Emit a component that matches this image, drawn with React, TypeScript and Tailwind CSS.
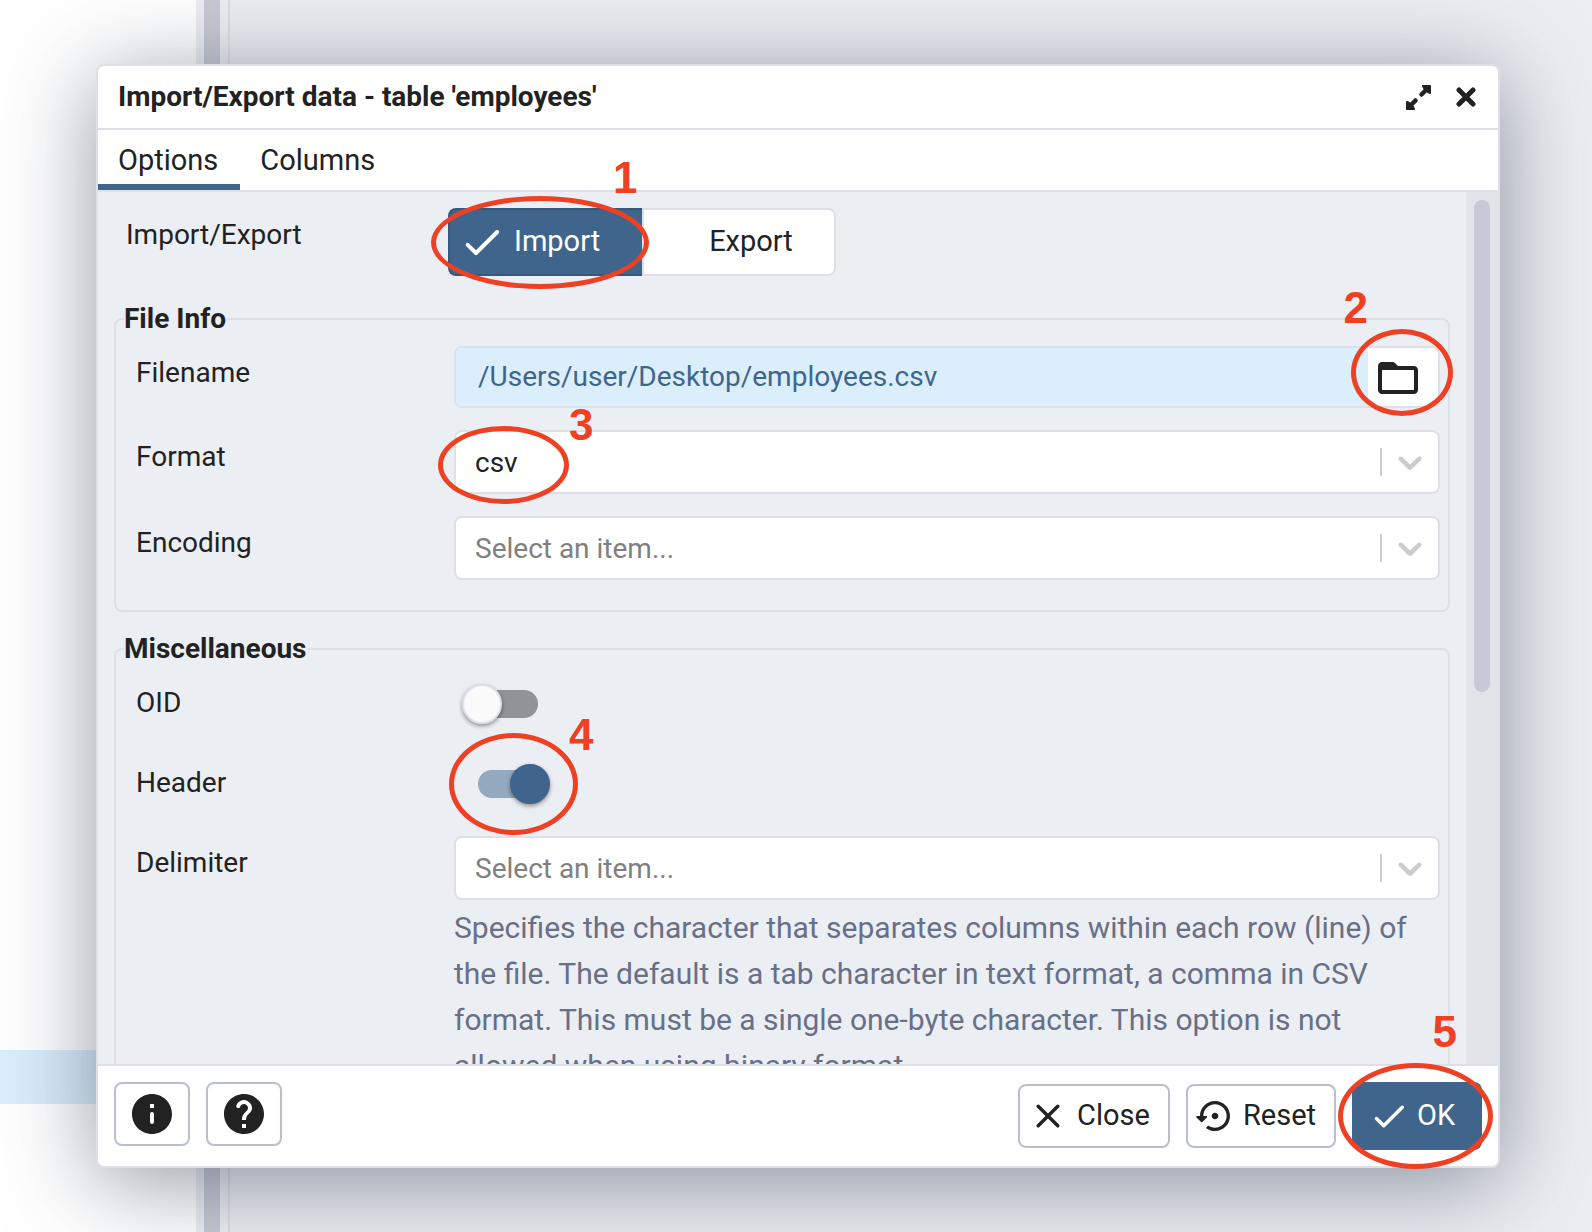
import React from "react";

const icons = {
  check:
    "M9 16.17L5.53 12.7c-.39-.39-1.02-.39-1.41 0-.39.39-.39 1.02 0 1.41l4.18 4.18c.39.39 1.02.39 1.41 0L20.29 7.71c.39-.39.39-1.02 0-1.41-.39-.39-1.02-.39-1.41 0L9 16.17z",
  close:
    "M18.3 5.71c-.39-.39-1.02-.39-1.41 0L12 10.59 7.11 5.7c-.39-.39-1.02-.39-1.41 0-.39.39-.39 1.02 0 1.41L10.59 12 5.7 16.89c-.39.39-.39 1.02 0 1.41.39.39 1.02.39 1.41 0L12 13.41l4.89 4.89c.39.39 1.02.39 1.41 0 .39-.39.39-1.02 0-1.41L13.41 12l4.89-4.89c.38-.38.38-1.02 0-1.4z",
  reset:
    "M14 12c0-1.1-.9-2-2-2s-2 .9-2 2 .9 2 2 2 2-.9 2-2zm-2-9c-4.97 0-9 4.03-9 9H1.21c-.45 0-.67.54-.35.85l2.79 2.79c.2.2.51.2.71 0l2.79-2.79c.3-.31.08-.85-.36-.85H5c0-3.87 3.13-7 7-7s7 3.13 7 7-3.13 7-7 7c-1.51 0-2.91-.49-4.06-1.3l-1.42 1.44C8.04 20.3 9.94 21 12 21c4.97 0 9-4.03 9-9s-4.03-9-9-9z",
  folder:
    "M20 6h-8l-1.41-1.41C10.21 4.21 9.7 4 9.17 4H4c-1.1 0-1.99.9-1.99 2L2 18c0 1.1.9 2 2 2h16c1.1 0 2-.9 2-2V8c0-1.1-.9-2-2-2zm-.500 12h-15c-.28 0-.5-.22-.5-.5v-9c0-.28.22-.5.5-.5h15c.28 0 .5.22.5.5v9c0 .28-.22.5-.5.5z",
  info: "M12 2C6.48 2 2 6.48 2 12s4.48 10 10 10 10-4.48 10-10S17.52 2 12 2zm0 15c-.55 0-1-.45-1-1v-4c0-.55.45-1 1-1s1 .45 1 1v4c0 .55-.45 1-1 1zm1-8h-2V7h2v2z",
  help: "M12 2C6.48 2 2 6.48 2 12s4.48 10 10 10 10-4.48 10-10S17.52 2 12 2zm1 17h-2v-2h2v2zm2.07-7.75l-.9.92c-.5.51-.86.97-1.04 1.69-.08.32-.13.68-.13 1.14h-2v-.5c0-.46.08-.9.22-1.31.2-.58.53-1.1.95-1.52l1.24-1.26c.46-.44.68-1.1.55-1.8-.13-.72-.69-1.33-1.39-1.53-1.11-.31-2.14.32-2.47 1.27-.12.37-.43.65-.82.65h-.3C8.4 9 8 8.44 8.16 7.88c.43-1.47 1.68-2.59 3.23-2.83 1.52-.24 2.97.55 3.87 1.8 1.18 1.63.83 3.38-.19 4.4z",
};

function Icon({ name, className }: { name: keyof typeof icons; className: string }) {
  return (
    <svg viewBox="0 0 24 24" fill="currentColor" className={className} aria-hidden="true">
      <path d={icons[name]} />
    </svg>
  );
}

function Row({
  label,
  htmlFor,
  children,
}: {
  label: string;
  htmlFor: string;
  children: React.ReactNode;
}) {
  return (
    <div className="flex items-start">
      <label htmlFor={htmlFor} className="w-[318px] shrink-0 pt-[7px] leading-10">
        {label}
      </label>
      <div className="min-w-0 flex-1">{children}</div>
    </div>
  );
}

function SelectField({ id, value, options }: { id: string; value: string; options: string[] }) {
  return (
    <div className="relative flex h-16 items-center rounded-lg border-2 border-[#dde0e6] bg-white">
      <select
        id={id}
        defaultValue={value}
        className={`h-full w-full appearance-none rounded-lg bg-transparent pl-[19px] pr-20 pt-0.5 outline-none ${
          value ? "text-[#222222]" : "text-[#808080]"
        }`}
      >
        <option value="">Select an item...</option>
        {options.map((option) => (
          <option key={option} value={option}>
            {option}
          </option>
        ))}
      </select>
      <div className="pointer-events-none absolute right-2 flex items-center gap-2">
        <div className="h-7 w-0.5 bg-[#cccccc]" />
        <svg viewBox="0 0 20 20" fill="#cccccc" className="h-10 w-10" aria-hidden="true">
          <path d="M4.516 7.548c0.436-0.446 1.043-0.481 1.576 0l3.908 3.747 3.908-3.747c0.533-0.481 1.141-0.446 1.574 0 0.436 0.445 0.408 1.197 0 1.615-0.406 0.418-4.695 4.502-4.695 4.502-0.217 0.223-0.502 0.335-0.787 0.335s-0.57-0.112-0.789-0.335c0 0-4.287-4.084-4.695-4.502s-0.436-1.17 0-1.615z" />
        </svg>
      </div>
    </div>
  );
}

function Switch({ id, defaultChecked = false }: { id: string; defaultChecked?: boolean }) {
  return (
    <div className="flex h-[58px] items-center pb-0.5">
      <div className="relative flex h-10 w-[84px] items-center px-2">
        <input
          id={id}
          type="checkbox"
          role="switch"
          defaultChecked={defaultChecked}
          className="peer h-7 w-full appearance-none rounded-full bg-[#929397] checked:bg-[#94a8c0]"
        />
        <span className="pointer-events-none absolute left-0 h-10 w-10 rounded-full border-2 border-[#dde0e6] bg-[#fafafa] shadow-[0_2px_4px_rgba(0,0,0,0.4)] peer-checked:left-10 peer-checked:border-[#40658c] peer-checked:bg-[#40658c]" />
      </div>
    </div>
  );
}

function App() {
  // Walkthrough steps drawn over the dialog
  const steps = [
    { id: 1, ring: "left-[333px] top-[130px] h-[93px] w-[218px]", digit: "left-[515px] top-[88px]" },
    { id: 2, ring: "right-[45px] top-[263px] h-[87px] w-[102px]", digit: "right-[130px] top-[218px]" },
    { id: 3, ring: "left-[340px] top-[360px] h-[78px] w-[131px]", digit: "left-[471px] top-[335px]" },
    { id: 4, ring: "left-[351px] top-[667px] h-[102px] w-[129px]", digit: "left-[471px] top-[645px]" },
    { id: 5, ring: "bottom-[-3px] right-[5px] h-[106px] w-[155px]", digit: "bottom-[110px] right-[41px]" },
  ];

  return (
    <div className="relative flex h-screen min-h-[600px] overflow-hidden bg-[#ebeef3] font-[Roboto,sans-serif] text-[28px] text-[#222222]">
      {/* Page behind the dialog */}
      <div className="flex w-[230px] shrink-0">
        <div className="flex flex-1 flex-col justify-end bg-white pb-32">
          <div className="h-[54px] bg-[#dbeefc]" />
        </div>
        <div className="w-[34px] border-r-2 border-[#dde0e6] bg-[#ebeef3]">
          <div className="flex h-full w-8 justify-center bg-[#eceef2]">
            <div className="w-4 bg-[#c7cad6]" />
          </div>
        </div>
      </div>

      {/* Dialog */}
      <div className="absolute inset-0 flex pb-16 pl-24 pr-[92px] pt-16">
        <div
          role="dialog"
          aria-labelledby="dialog-title"
          className="relative flex min-w-0 flex-1 flex-col rounded-lg border-2 border-[#dde0e6] bg-white shadow-[0_14px_92px_rgba(55,66,84,0.55)]"
        >
          <header className="flex h-16 shrink-0 items-center border-b-2 border-[#dde0e6] px-5">
            <h1 id="dialog-title" className="flex-1 font-bold">
              Import/Export data - table 'employees'
            </h1>
            <div className="flex items-center gap-6">
              <button aria-label="Maximize" className="flex h-6 w-6 items-center justify-center">
                <svg
                  viewBox="0 0 25 25"
                  className="h-[25px] w-[25px] shrink-0"
                  fill="currentColor"
                  stroke="currentColor"
                  strokeLinecap="round"
                  strokeLinejoin="round"
                  aria-hidden="true"
                >
                  <path d="M17 1h7v7l-2-1-4-4zM8 24H1v-7l2 1 4 4z" strokeWidth="2" />
                  <path d="M15.500 9.500l5-5M9.500 15.500l-5 5" strokeWidth="4.500" />
                </svg>
              </button>
              <button aria-label="Close dialog" className="flex h-6 w-6 items-center justify-center">
                <svg
                  viewBox="0 0 20 20"
                  className="h-5 w-5"
                  stroke="currentColor"
                  strokeWidth="5"
                  strokeLinecap="round"
                  aria-hidden="true"
                >
                  <path d="M3 3l14 14M17 3L3 17" />
                </svg>
              </button>
            </div>
          </header>

          <div role="tablist" className="flex h-[62px] shrink-0 border-b-2 border-[#dde0e6] text-[29px]">
            <button
              role="tab"
              aria-selected="true"
              className="border-b-[6px] border-[#40658c] pl-5 pr-[22px] pt-2"
            >
              Options
            </button>
            <button role="tab" aria-selected="false" className="px-5 pt-0.5">
              Columns
            </button>
          </div>

          <div className="flex min-h-0 flex-1 bg-[#ebeef3]">
            <div className="min-w-0 flex-1 overflow-hidden px-4 pt-4">
              <div className="flex items-start pl-3">
                <span id="mode-label" className="w-[322px] shrink-0 pt-[7px] leading-10">
                  Import/Export
                </span>
                <div role="group" aria-labelledby="mode-label" className="flex h-[68px] text-[29px]">
                  <button
                    aria-pressed="true"
                    className="flex w-[194px] items-center gap-2 rounded-l-lg border-2 border-r-0 border-[#36587c] bg-[#40658c] pl-2 text-white"
                  >
                    <Icon name="check" className="h-12 w-12" />
                    Import
                  </button>
                  <button
                    aria-pressed="false"
                    className="w-[194px] rounded-r-lg border-2 border-[#dde0e6] bg-white pl-6"
                  >
                    Export
                  </button>
                </div>
              </div>

              <fieldset className="mt-6 rounded-lg border-2 border-[#dde0e6] pb-[30px] pl-5 pr-2">
                <legend className="-ml-3 font-bold leading-[38px]">File Info</legend>
                <div className="flex flex-col gap-[22px] pt-2">
                  <Row label="Filename" htmlFor="filename">
                    <div className="flex h-[62px] overflow-hidden rounded-lg border-2 border-[#dde0e6] bg-white">
                      <input
                        id="filename"
                        type="text"
                        readOnly
                        defaultValue="/Users/user/Desktop/employees.csv"
                        className="min-w-0 flex-1 bg-[#dbeefc] pl-[22px] text-[#40658c] outline-none"
                      />
                      <button aria-label="Select file" className="flex w-[70px] items-center pl-1.5 pt-0.5">
                        <Icon name="folder" className="h-12 w-12" />
                      </button>
                    </div>
                  </Row>
                  <Row label="Format" htmlFor="format">
                    <SelectField id="format" value="csv" options={["binary", "csv", "text"]} />
                  </Row>
                  <Row label="Encoding" htmlFor="encoding">
                    <SelectField id="encoding" value="" options={["UTF8", "LATIN1"]} />
                  </Row>
                </div>
              </fieldset>

              <fieldset className="mt-[18px] rounded-lg border-2 border-[#dde0e6] pb-[30px] pl-5 pr-2">
                <legend className="-ml-3 font-bold leading-[38px]">Miscellaneous</legend>
                <div className="flex flex-col gap-[22px] pt-2">
                  <Row label="OID" htmlFor="oid">
                    <div className="pl-2">
                      <Switch id="oid" />
                    </div>
                  </Row>
                  <Row label="Header" htmlFor="header">
                    <div className="pl-4">
                      <Switch id="header" defaultChecked />
                    </div>
                  </Row>
                  <Row label="Delimiter" htmlFor="delimiter">
                    <SelectField id="delimiter" value="" options={[",", ";", "|"]} />
                    <p className="mt-[5px] text-[30px] leading-[46px] text-[#697086]">
                      Specifies the character that separates columns within each row (line) of
                      the file. The default is a tab character in text format, a comma in CSV
                      format. This must be a single one-byte character. This option is not
                      allowed when using binary format.
                    </p>
                  </Row>
                </div>
              </fieldset>
            </div>

            {/* Scrollbar */}
            <div className="w-8 shrink-0 bg-[#e1e4e9] p-2">
              <div className="h-[57.5%] rounded-full bg-[#c7cad6]" />
            </div>
          </div>

          <footer className="flex h-[102px] shrink-0 items-start justify-between border-t-2 border-[#dde0e6] px-4 pt-4 text-[29px]">
            <div className="flex gap-4">
              <button
                aria-label="Info"
                className="flex h-16 w-[76px] items-center justify-center rounded-lg border-2 border-[#babfce]"
              >
                <Icon name="info" className="h-12 w-12" />
              </button>
              <button
                aria-label="Help"
                className="flex h-16 w-[76px] items-center justify-center rounded-lg border-2 border-[#babfce]"
              >
                <Icon name="help" className="h-12 w-12" />
              </button>
            </div>
            <div className="flex items-center gap-4">
              <button className="flex h-16 w-[152px] items-center gap-2 rounded-lg border-2 border-[#babfce] pl-[7px]">
                <Icon name="close" className="h-[42px] w-[42px]" />
                Close
              </button>
              <button className="flex h-16 w-[150px] items-center gap-2 rounded-lg border-2 border-[#babfce] pl-[7px]">
                <Icon name="reset" className="h-10 w-10" />
                Reset
              </button>
              <button className="flex h-[68px] w-[130px] items-center gap-[7px] rounded-lg bg-[#40658c] pl-4 text-white">
                <Icon name="check" className="h-[42px] w-[42px]" />
                OK
              </button>
            </div>
          </footer>

          {steps.map((step) => (
            <div key={step.id} className="pointer-events-none">
              <div className={`absolute rounded-[50%] border-[5px] border-[#ee4023] ${step.ring}`} />
              <span
                className={`absolute font-['Liberation_Sans',sans-serif] text-[44px] font-bold leading-[48px] text-[#ee4023] ${step.digit}`}
              >
                {step.id}
              </span>
            </div>
          ))}
        </div>
      </div>
    </div>
  );
}

export default App;
